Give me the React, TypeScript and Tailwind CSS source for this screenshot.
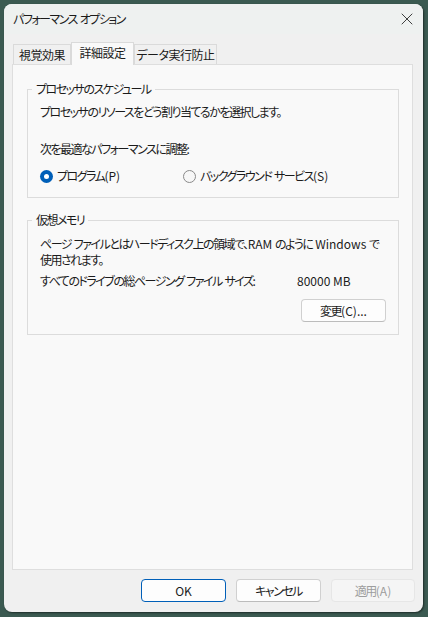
import { X } from 'lucide-react';

const font = "font-['Noto_Sans_CJK_JP','Noto_Sans',sans-serif] [font-feature-settings:'palt'] tracking-[-1.5px]";

// Japanese runs are tightened to mimic Yu Gothic UI's narrow kana; ASCII runs keep normal spacing
function T({ children }: { children: string }) {
    const parts = children.split(/([\x20-\x7e]+)/).filter(Boolean);
    return (
        <>
            {parts.map((p, i) =>
                /^[\x20-\x7e]+$/.test(p) ? (
                    <span key={i} className="tracking-normal whitespace-pre">{p}</span>
                ) : (
                    <span key={i}>{p}</span>
                )
            )}
        </>
    );
}

function Radio({ checked, label }: { checked?: boolean; label: string }) {
    return (
        <div className="flex items-center">
            {checked ? (
                <span className="w-[13px] h-[13px] rounded-full bg-[#005fb8] flex items-center justify-center">
                    <span className="w-[5px] h-[5px] rounded-full bg-white" />
                </span>
            ) : (
                <span className="w-[13px] h-[13px] rounded-full border border-[#8a8a8a] bg-[#f7f7f7]" />
            )}
            <span className="ml-[4px] leading-[16px] whitespace-nowrap"><T>{label}</T></span>
        </div>
    );
}

function Button({ label, variant = 'normal', width = 'w-[85px]' }: { label: string; variant?: 'normal' | 'default' | 'disabled'; width?: string }) {
    const styles = {
        normal: 'bg-[#fdfdfd] border-[#d0d0d0] border-b-[#bcbcbc] text-[#1b1b1b]',
        default: 'bg-[#fdfdfd] border-[#005fb8] text-[#1b1b1b]',
        disabled: 'bg-[#f5f5f5] border-[#e6e6e6] text-[#9d9d9d]',
    }[variant];
    return (
        <div className={`${width} h-[23px] rounded-[4px] border flex items-center justify-center text-[12px] whitespace-nowrap ${styles}`}>
            <T>{label}</T>
        </div>
    );
}

function GroupBox({ title, className, children }: { title: string; className?: string; children: React.ReactNode }) {
    return (
        <div className={`relative border border-[#dcdcdc] ${className ?? ''}`}>
            <span className="absolute left-[4px] top-[-9px] px-[4px] bg-[#f9f9f9] leading-[16px] whitespace-nowrap">{title}</span>
            {children}
        </div>
    );
}

export default function App() {
    return (
        <div className={`w-[428px] h-[617px] bg-[#3b5a51] pt-[4px] pl-[4px] ${font} text-[12px] text-[#1b1b1b]`}>
            <div className="w-[419px] h-[608px] rounded-[8px] bg-[#f0f0f0] flex flex-col overflow-hidden shadow-[1px_1px_2px_rgba(0,0,0,0.5)]">
                {/* Title bar */}
                <div className="h-[30px] flex items-center pl-[9px] pr-[6px] bg-[#eef1f0]">
                    <span className="leading-[16px]"><T>パフォーマンス オプション</T></span>
                    <X className="ml-auto text-[#1b1b1b]" size={20} strokeWidth={1} />
                </div>

                {/* Tabs */}
                <div className="h-[30px] flex items-end pl-[9px] relative z-10 whitespace-nowrap tracking-[-0.5px]">
                    <div className="w-[58px] h-[20px] border border-b-0 border-[#dadada] bg-[#f0f0f0] flex items-center justify-center">
                        視覚効果
                    </div>
                    <div className="w-[63px] h-[23px] -mb-px border border-b-0 border-[#dadada] bg-[#f9f9f9] flex items-center justify-center pb-[2px]">
                        詳細設定
                    </div>
                    <div className="w-[83px] h-[20px] border border-b-0 border-[#dadada] bg-[#f0f0f0] flex items-center justify-center">
                        データ実行防止
                    </div>
                </div>

                {/* Panel */}
                <div className="ml-[8px] mr-[10px] h-[506px] border border-[#dedede] bg-[#f9f9f9] pt-[24px] pl-[14px] pr-[13px]">
                    <GroupBox title="プロセッサのスケジュール" className="pt-[14px] pl-[12px] pb-[13px]">
                        <div className="leading-[16px] whitespace-nowrap">プロセッサのリソースをどう割り当てるかを選択します。</div>
                        <div className="leading-[16px] mt-[21px] whitespace-nowrap"><T>次を最適なパフォーマンスに調整:</T></div>
                        <div className="flex mt-[11px]">
                            <div className="w-[143px]">
                                <Radio checked label="プログラム(P)" />
                            </div>
                            <Radio label="バックグラウンド サービス(S)" />
                        </div>
                    </GroupBox>

                    <GroupBox title="仮想メモリ" className="mt-[22px] pt-[15px] pl-[12px] pr-[12px] pb-[12px]">
                        <div className="leading-[16px] whitespace-nowrap">
                            <T>ページ ファイルとはハードディスク上の領域で、RAM のように Windows で</T>
                            <br />
                            使用されます。
                        </div>
                        <div className="flex leading-[16px] mt-[5px] whitespace-nowrap">
                            <span className="w-[257px]"><T>すべてのドライブの総ページング ファイル サイズ:</T></span>
                            <T>80000 MB</T>
                        </div>
                        <div className="flex justify-end mt-[10px]">
                            <Button label="変更(C)..." />
                        </div>
                    </GroupBox>
                </div>

                {/* Footer buttons */}
                <div className="flex justify-end gap-[10px] mt-[9px] pr-[8px]">
                    <Button variant="default" label="OK" />
                    <Button label="キャンセル" />
                    <Button variant="disabled" width="w-[84px]" label="適用(A)" />
                </div>
            </div>
        </div>
    );
}
